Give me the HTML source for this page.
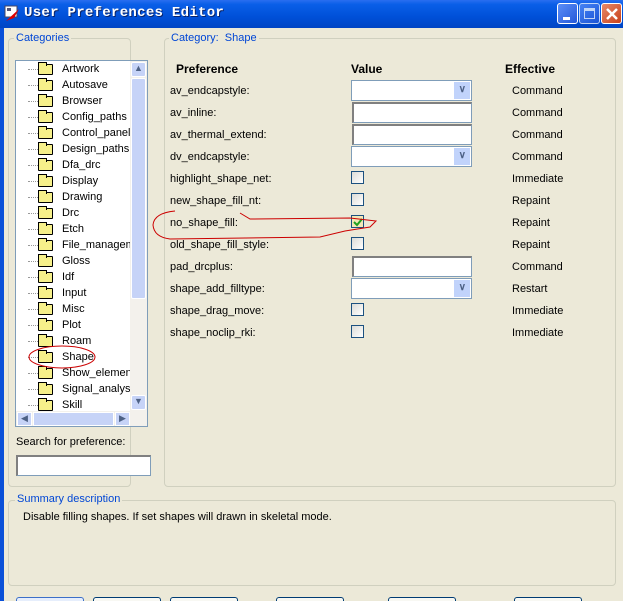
<!DOCTYPE html>
<html style="width:623px;height:601px;overflow:hidden"><head><style>
*{box-sizing:border-box;margin:0;padding:0}
html,body{width:623px;height:601px;overflow:hidden}
body{background:#ECE9D8;font-family:"Liberation Sans",sans-serif;font-size:11px;color:#000;position:relative}
.abs{position:absolute}
#title{left:0;top:0;width:623px;height:28px;background:linear-gradient(#2a6ef0 0%,#0a5fe8 15%,#0050d8 60%,#0045c4 100%);}
#title span{position:absolute;left:24px;top:5px;color:#fff;font-family:"Liberation Mono",monospace;font-weight:bold;font-size:14px;letter-spacing:0.3px;text-shadow:1px 1px #0a246a}
.tb{position:absolute;top:3px;width:21px;height:21px;border:1px solid #fff;border-radius:3px;background:linear-gradient(135deg,#5b8ef8,#2458d8)}
#lb{left:0;top:28px;width:4px;height:573px;background:#0a50d8}
.gb{position:absolute;border:1px solid #d0d0bf;border-radius:4px}
.gl{position:absolute;background:#ECE9D8;color:#0046d5;padding:0 2px;font-size:11px}
.tree{left:15px;top:60px;width:133px;height:367px;background:#fff;border:1px solid #7f9db9;overflow:hidden}
.it{position:absolute;left:22px;height:16px;font-size:11px;white-space:nowrap}
.it i{position:absolute;left:0;top:2px;width:15px;height:11px;background:#f6f08a;border:1px solid #000;border-radius:1px}
.it i:before{content:"";position:absolute;left:-1px;top:-3px;width:7px;height:3px;border:1px solid #000;border-bottom:none;background:#f6f08a}
.it b{font-weight:normal;position:absolute;left:24px;top:1px}
.it u{position:absolute;left:-10px;top:7px;width:10px;border-top:1px dotted #999;text-decoration:none}
.sb{background:#c6d3f7}
.row{position:absolute;left:170px;font-size:11px}
.eff{position:absolute;left:512px;font-size:11px}
.combo{position:absolute;left:351px;width:121px;height:21px;background:#fff;border:1px solid #7f9db9}
.combo:after{content:"";position:absolute;right:1px;top:1px;width:16px;height:17px;background:#c1d3fb}
.combo em{position:absolute;right:5px;top:3px;font-style:normal;color:#4d6185;font-size:10px;z-index:2;font-weight:bold}
.txt{position:absolute;left:352px;width:120px;height:21px;background:#fff;border:1px solid #7f9db9;border-top:2px solid #808080;border-left:2px solid #808080}
.cb{position:absolute;left:351px;width:13px;height:13px;border:1px solid #1c5180;background:linear-gradient(135deg,#dcdcd7,#fff)}
.btn{position:absolute;top:597px;height:4px;width:68px;border:1px solid #003c74;border-bottom:none;border-radius:3px 3px 0 0;background:#f8f8f3}
</style></head><body>
<div id="title" class="abs">
<svg class="abs" style="left:4px;top:5px" width="18" height="18"><rect x="1" y="1" width="12" height="11" fill="#fff" stroke="#446"/><rect x="3" y="3" width="4" height="3" fill="#557"/><path d="M2 16 L15 4 L10 13 Z" fill="#d00"/></svg>
<span>User Preferences Editor</span>
<div class="tb" style="left:557px"><div class="abs" style="left:5px;top:13px;width:7px;height:3px;background:#fff"></div></div>
<div class="tb" style="left:579px;opacity:.75"><div class="abs" style="left:4px;top:4px;width:11px;height:11px;border:1px solid #fff;border-top-width:3px"></div></div>
<div class="tb" style="left:601px;background:linear-gradient(135deg,#e88a6a,#c8401a)"><svg class="abs" style="left:3px;top:3px" width="14" height="14"><path d="M2 2L12 12M12 2L2 12" stroke="#fff" stroke-width="2.5"/></svg></div>
</div>
<div id="lb" class="abs"></div>

<div class="gb" style="left:8px;top:38px;width:123px;height:449px"></div>
<div class="gl" style="left:14px;top:32px">Categories</div>
<div class="gb" style="left:164px;top:38px;width:452px;height:449px"></div>
<div class="gl" style="left:169px;top:32px">Category:&nbsp; Shape</div>

<div class="abs tree">
<div class="it" style="top:1px"><u></u><i></i><b>Artwork</b></div>
<div class="it" style="top:17px"><u></u><i></i><b>Autosave</b></div>
<div class="it" style="top:33px"><u></u><i></i><b>Browser</b></div>
<div class="it" style="top:49px"><u></u><i></i><b>Config_paths</b></div>
<div class="it" style="top:65px"><u></u><i></i><b>Control_panel</b></div>
<div class="it" style="top:81px"><u></u><i></i><b>Design_paths</b></div>
<div class="it" style="top:97px"><u></u><i></i><b>Dfa_drc</b></div>
<div class="it" style="top:113px"><u></u><i></i><b>Display</b></div>
<div class="it" style="top:129px"><u></u><i></i><b>Drawing</b></div>
<div class="it" style="top:145px"><u></u><i></i><b>Drc</b></div>
<div class="it" style="top:161px"><u></u><i></i><b>Etch</b></div>
<div class="it" style="top:177px"><u></u><i></i><b>File_managem</b></div>
<div class="it" style="top:193px"><u></u><i></i><b>Gloss</b></div>
<div class="it" style="top:209px"><u></u><i></i><b>Idf</b></div>
<div class="it" style="top:225px"><u></u><i></i><b>Input</b></div>
<div class="it" style="top:241px"><u></u><i></i><b>Misc</b></div>
<div class="it" style="top:257px"><u></u><i></i><b>Plot</b></div>
<div class="it" style="top:273px"><u></u><i></i><b>Roam</b></div>
<div class="it" style="top:289px"><u></u><i></i><b>Shape</b></div>
<div class="it" style="top:305px"><u></u><i></i><b>Show_elemen</b></div>
<div class="it" style="top:321px"><u></u><i></i><b>Signal_analysi</b></div>
<div class="it" style="top:337px"><u></u><i></i><b>Skill</b></div>
<div class="abs" style="left:114px;top:0;width:17px;height:350px;background:#f3f1ec"></div>
<div class="abs sb" style="left:115px;top:1px;width:15px;height:15px;border:1px solid #fff;border-radius:2px;text-align:center;color:#4d6185;font-size:9px">&#9650;</div>
<div class="abs sb" style="left:115px;top:17px;width:15px;height:221px;border:1px solid #fff;border-radius:2px"></div>
<div class="abs sb" style="left:115px;top:334px;width:15px;height:15px;border:1px solid #fff;border-radius:2px;text-align:center;color:#4d6185;font-size:9px">&#9660;</div>
<div class="abs" style="left:0;top:350px;width:131px;height:15px;background:#f3f1ec"></div>
<div class="abs sb" style="left:1px;top:351px;width:15px;height:14px;border:1px solid #fff;text-align:center;color:#4d6185;font-size:9px">&#9664;</div>
<div class="abs sb" style="left:17px;top:351px;width:81px;height:14px;border:1px solid #fff"></div>
<div class="abs sb" style="left:99px;top:351px;width:15px;height:14px;border:1px solid #fff;text-align:center;color:#4d6185;font-size:9px">&#9654;</div>
</div>
<svg class="abs" style="left:27px;top:343px" width="72" height="28"><ellipse cx="35" cy="14" rx="33" ry="11" fill="none" stroke="#c00" stroke-width="1"/></svg>

<div class="abs" style="left:16px;top:436px;font-size:11px">Search for preference:</div>
<div class="abs" style="left:16px;top:455px;width:135px;height:21px;background:#fff;border:1px solid #7f9db9;border-top:2px solid #808080;border-left:2px solid #808080"></div>

<div class="abs" style="left:176px;top:62px;font-weight:bold;font-size:12px">Preference</div>
<div class="abs" style="left:351px;top:62px;font-weight:bold;font-size:12px">Value</div>
<div class="abs" style="left:505px;top:62px;font-weight:bold;font-size:12px">Effective</div>

<div class="row" style="top:85px">av_endcapstyle:</div><div class="combo" style="top:80px"><em>&#8744;</em></div><div class="eff" style="top:85px">Command</div>
<div class="row" style="top:107px">av_inline:</div><div class="txt" style="top:102px"></div><div class="eff" style="top:107px">Command</div>
<div class="row" style="top:129px">av_thermal_extend:</div><div class="txt" style="top:124px"></div><div class="eff" style="top:129px">Command</div>
<div class="row" style="top:151px">dv_endcapstyle:</div><div class="combo" style="top:146px"><em>&#8744;</em></div><div class="eff" style="top:151px">Command</div>
<div class="row" style="top:173px">highlight_shape_net:</div><div class="cb" style="top:171px"></div><div class="eff" style="top:173px">Immediate</div>
<div class="row" style="top:195px">new_shape_fill_nt:</div><div class="cb" style="top:193px"></div><div class="eff" style="top:195px">Repaint</div>
<div class="row" style="top:217px">no_shape_fill:</div><div class="cb" style="top:215px;background:#f4e8b8"><svg class="abs" style="left:1px;top:1px" width="10" height="10"><path d="M1 5L4 8L9 2" stroke="#21a121" stroke-width="2" fill="none"/></svg></div><div class="eff" style="top:217px">Repaint</div>
<div class="row" style="top:239px">old_shape_fill_style:</div><div class="cb" style="top:237px"></div><div class="eff" style="top:239px">Repaint</div>
<div class="row" style="top:261px">pad_drcplus:</div><div class="txt" style="top:256px"></div><div class="eff" style="top:261px">Command</div>
<div class="row" style="top:283px">shape_add_filltype:</div><div class="combo" style="top:278px"><em>&#8744;</em></div><div class="eff" style="top:283px">Restart</div>
<div class="row" style="top:305px">shape_drag_move:</div><div class="cb" style="top:303px"></div><div class="eff" style="top:305px">Immediate</div>
<div class="row" style="top:327px">shape_noclip_rki:</div><div class="cb" style="top:325px"></div><div class="eff" style="top:327px">Immediate</div>

<svg class="abs" style="left:150px;top:205px" width="230" height="40"><path d="M90 8 L100 14 L200 13 L226 16 L220 22 L195 26 L170 32 L20 34 Q4 32 3 20 Q4 8 25 6" fill="none" stroke="#c00" stroke-width="1"/></svg>

<div class="gb" style="left:8px;top:500px;width:608px;height:86px"></div>
<div class="gl" style="left:15px;top:493px">Summary description</div>
<div class="abs" style="left:23px;top:511px">Disable filling shapes. If set shapes will drawn in skeletal mode.</div>

<div class="btn" style="left:16px;border-color:#3c6fc8;background:#e6eefc"></div>
<div class="btn" style="left:93px"></div>
<div class="btn" style="left:170px"></div>
<div class="btn" style="left:276px"></div>
<div class="btn" style="left:388px"></div>
<div class="btn" style="left:514px"></div>
</body></html>
